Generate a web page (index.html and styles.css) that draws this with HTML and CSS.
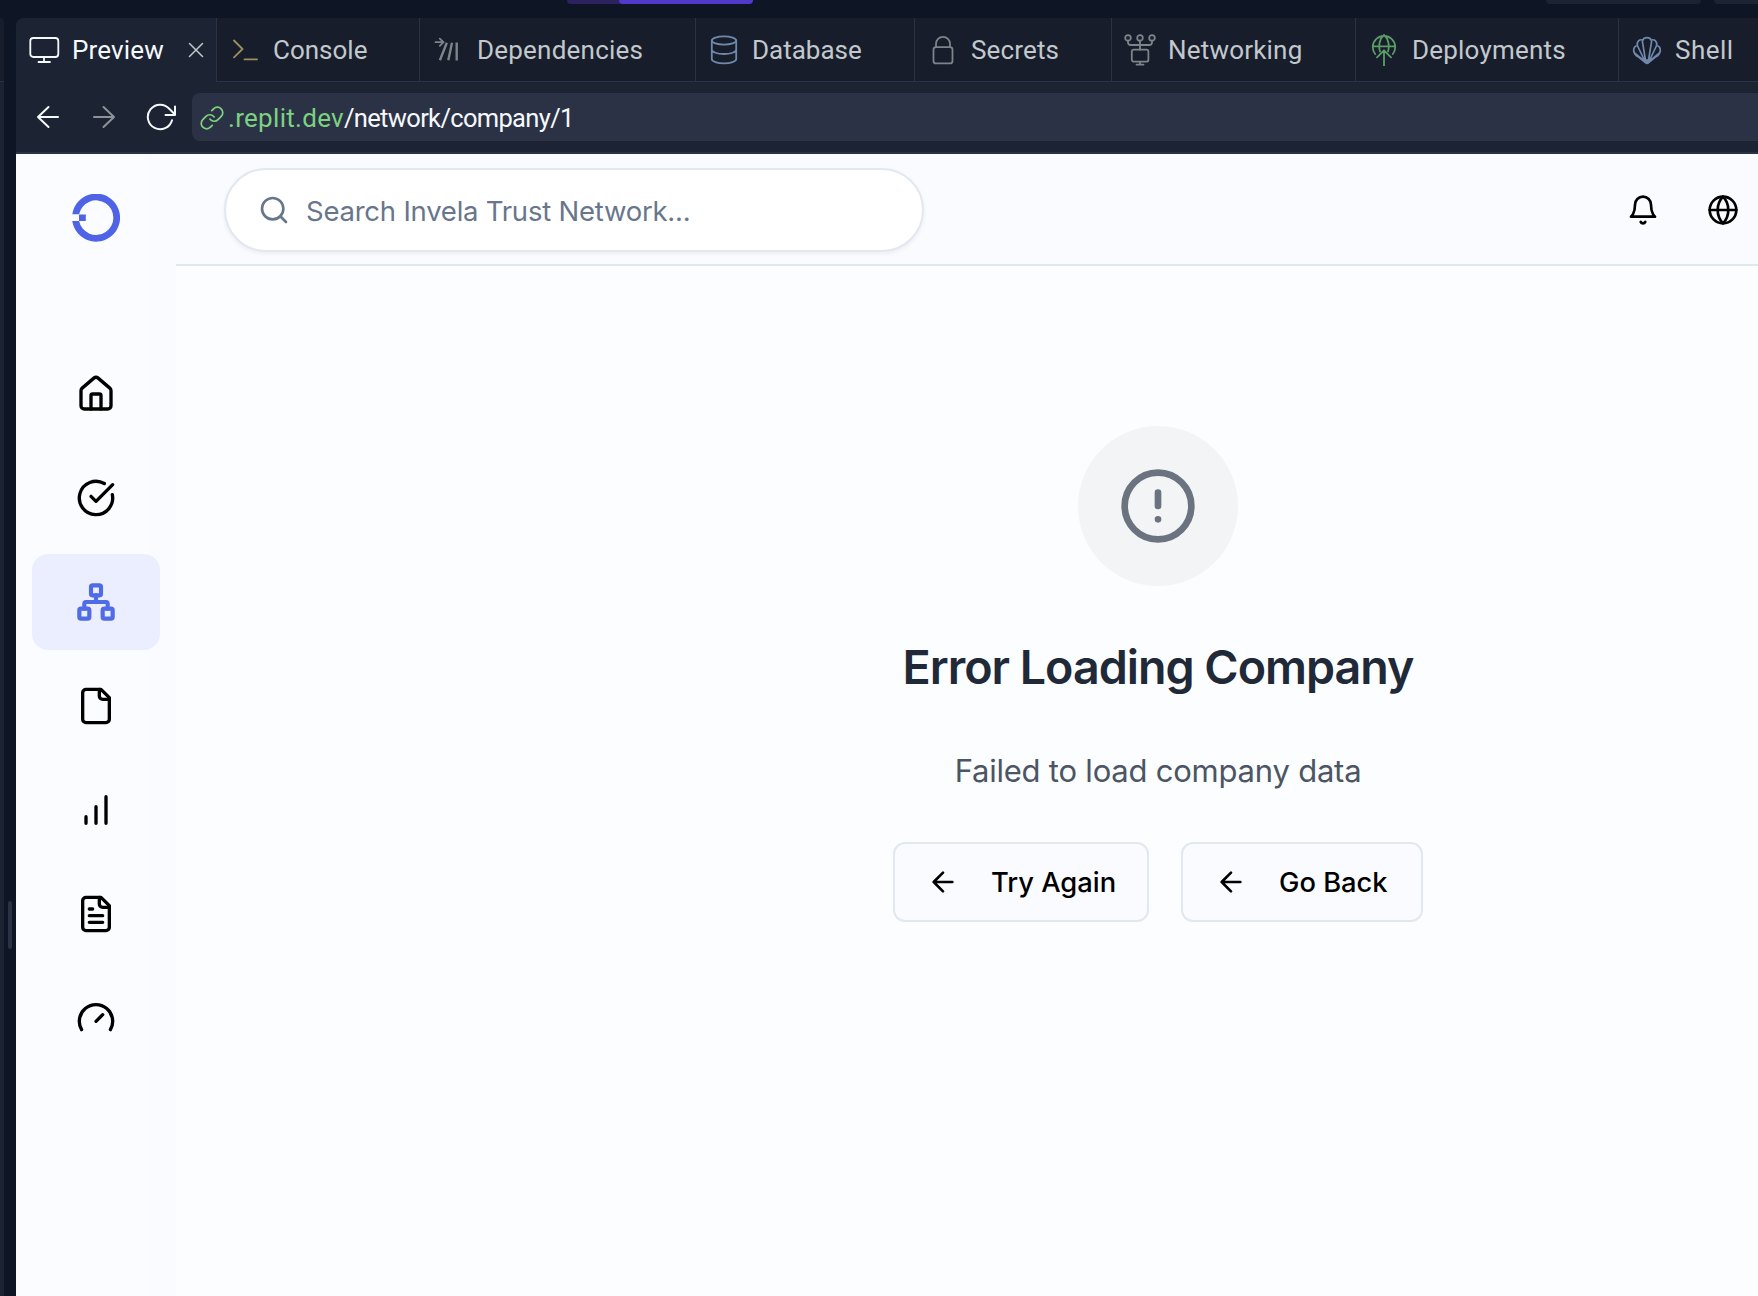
FILE: index.html
```html
<!DOCTYPE html>
<html lang="en">
<head>
<meta charset="utf-8">
<title>Preview</title>
<link rel="stylesheet" href="styles.css">
</head>
<body>
<div class="topbar">
  <div class="run"><div class="run-main"></div></div>
  <div class="chip chip-a"></div>
  <div class="chip chip-b"></div>
</div>
<div class="workspace">
  <div class="left-pane"><div class="left-tab"></div></div>
  <div class="gutter"><div class="handle"></div></div>
  <section class="pane">
    <nav class="tabs">
      <div class="tab active">
        <svg width="32" height="32" viewBox="0 0 32 32"><rect x="2.3" y="4" width="28" height="19" rx="3"/><path d="M16 23v5M10.5 28h11.5"/></svg>
        <span class="t-preview">Preview</span>
        <svg class="close" width="16" height="16" viewBox="0 0 16 16"><path d="M1.5 1.5l13 13M14.5 1.5l-13 13"/></svg>
      </div>
      <div class="tab w-console">
        <svg class="yellow" width="32" height="32" viewBox="0 0 32 32"><path d="M5 6.5l8.5 8.5L5 23.3M15.5 25.4H28"/></svg>
        <span class="t-console">Console</span>
      </div>
      <div class="tab w-deps">
        <svg class="gray" width="32" height="32" viewBox="0 0 32 32"><path d="M3.5 8.2h8M7.8 4.6l3.7 3.6-3.7 3.6"/><path class="thick" d="M14.8 8.8L7.9 26.2M20 8.8l-3.7 17.4M24.7 8.4v18.2"/></svg>
        <span class="t-deps">Dependencies</span>
      </div>
      <div class="tab w-db">
        <svg class="blue" width="32" height="32" viewBox="0 0 32 32"><ellipse cx="16" cy="6.5" rx="12.2" ry="4.1"/><path d="M3.8 6.5V25c0 2.4 5.5 4.3 12.2 4.3S28.2 27.4 28.2 25V6.5M3.8 15.8c0 2.3 5.5 4.2 12.2 4.2s12.2-1.9 12.2-4.2"/></svg>
        <span class="t-db">Database</span>
      </div>
      <div class="tab w-secrets">
        <svg class="gray" width="32" height="32" viewBox="0 0 32 32"><rect x="6.5" y="13.2" width="19" height="16.2" rx="2.5"/><path d="M9 13V9.8a7 7 0 0 1 14 0V13"/></svg>
        <span class="t-secrets">Secrets</span>
      </div>
      <div class="tab w-net">
        <svg class="gray" width="32" height="32" viewBox="0 0 32 32"><circle cx="4" cy="3.9" r="2.8"/><circle cx="16" cy="3.9" r="2.8"/><circle cx="28" cy="3.9" r="2.8"/><path d="M4 6.7v1.5a2.8 2.8 0 0 0 2.8 2.8h18.4A2.8 2.8 0 0 0 28 8.2V6.7M16 6.7v9M16 28v2.500M12.5 30.6h7"/><rect x="7.8" y="15.7" width="16.6" height="12" rx="2"/></svg>
        <span class="t-net">Networking</span>
      </div>
      <div class="tab w-deploy">
        <svg class="green" width="32" height="32" viewBox="0 0 32 32"><path d="M7.2 20a11.2 11.2 0 1 1 17.6 0M4.8 12.3h22.400M12 17.5C10.2 12 11.5 4.5 16 1c4.500 3.500 5.800 11 4 16.500M16 16.500v15.500M9 23.300l7-7 7 7"/></svg>
        <span class="t-deploy">Deployments</span>
      </div>
      <div class="tab w-shell">
        <svg class="blue shell" width="32" height="32" viewBox="0 0 32 32"><path d="M14.600 27L11.400 7.300a4.700 4.700 0 0 1 9.200 0L17.400 27M13.800 27L6.400 11.500C5.500 7.500 8.500 5 11.600 6M18.200 27l7.400-15.500C26.500 7.500 23.500 5 20.400 6M15 29l-8-6.300C4.500 21.500 3.300 19.800 2.700 17c-.2-3 1.300-5 3.700-5.500M17 29l8-6.300c2.500-1.200 3.700-2.900 4.300-5.700.2-3-1.300-5-3.700-5.500M14.500 28L3.500 19M17.500 28l11-9"/><path class="solid" d="M12.500 26l3.500 3.500 3.500-3.500z"/></svg>
        <span class="t-shell">Shell</span>
      </div>
    </nav>
    <div class="toolbar">
      <svg class="nav-i" width="24" height="24" viewBox="0 0 24 24"><path d="M22 12H2M12.500 2L2 12l10.500 10"/></svg>
      <svg class="nav-i dim" width="24" height="24" viewBox="0 0 24 24"><path d="M2 12h20M11.500 2L22 12 11.500 22"/></svg>
      <svg class="nav-i reload" width="32" height="32" viewBox="0 0 32 32"><path d="M28 19.200A12.300 12.300 0 1 1 25.500 8l5.500 5.500M31 5.500v8.500h-9.500"/></svg>
      <div class="url">
        <svg width="26" height="26" viewBox="0 0 24 24"><path d="M10 13a5 5 0 0 0 7.540.540l3-3a5 5 0 0 0-7.070-7.070l-1.720 1.710"/><path d="M14 11a5 5 0 0 0-7.540-.540l-3 3a5 5 0 0 0 7.070 7.070l1.710-1.710"/></svg>
        <span class="host">.replit.dev</span><span class="path">/network/company/1</span>
      </div>
    </div>
    <div class="app">
      <aside class="sidebar">
        <svg class="logo" width="48" height="48" viewBox="0 0 48 48"><path d="M.3 20.300A24 24 0 1 1 .3 27H7.100A17.300 17.300 0 1 0 7.100 20.300zM7 20.500h6.800V27H7z"/></svg>
        <div class="item"><svg class="lu" width="40" height="40" viewBox="0 0 24 24"><path d="M15 21v-8a1 1 0 0 0-1-1h-4a1 1 0 0 0-1 1v8"/><path d="M3 10a2 2 0 0 1 .709-1.528l7-5.999a2 2 0 0 1 2.582 0l7 5.999A2 2 0 0 1 21 10v9a2 2 0 0 1-2 2H5a2 2 0 0 1-2-2z"/></svg></div>
        <div class="item"><svg class="lu" width="40" height="40" viewBox="0 0 24 24"><path d="M21.801 10A10 10 0 1 1 17 3.335"/><path d="m9 11 3 3L22 4"/></svg></div>
        <div class="item current"><svg class="lu" width="40" height="40" viewBox="0 0 24 24"><rect x="16" y="16" width="6" height="6" rx="1"/><rect x="2" y="16" width="6" height="6" rx="1"/><rect x="9" y="2" width="6" height="6" rx="1"/><path d="M5 16v-3a1 1 0 0 1 1-1h12a1 1 0 0 1 1 1v3M12 12V8"/></svg></div>
        <div class="item"><svg class="lu" width="40" height="40" viewBox="0 0 24 24"><path d="M15 2H6a2 2 0 0 0-2 2v16a2 2 0 0 0 2 2h12a2 2 0 0 0 2-2V7Z"/><path d="M14 2v4a2 2 0 0 0 2 2h4"/></svg></div>
        <div class="item"><svg class="lu" width="40" height="40" viewBox="0 0 24 24"><path d="M12 20V10M18 20V4M6 20v-4"/></svg></div>
        <div class="item"><svg class="lu" width="40" height="40" viewBox="0 0 24 24"><path d="M15 2H6a2 2 0 0 0-2 2v16a2 2 0 0 0 2 2h12a2 2 0 0 0 2-2V7Z"/><path d="M14 2v4a2 2 0 0 0 2 2h4M10 9H8M16 13H8M16 17H8"/></svg></div>
        <div class="item"><svg class="lu" width="40" height="40" viewBox="0 0 24 24"><path d="m12 14 4-4M3.340 19a10 10 0 1 1 17.320 0"/></svg></div>
      </aside>
      <div class="content">
        <header class="header">
          <div class="search">
            <svg class="lu" width="32" height="32" viewBox="0 0 24 24"><circle cx="11" cy="11" r="8"/><path d="m21 21-4.300-4.300"/></svg>
            <span>Search Invela Trust Network...</span>
          </div>
          <div class="actions">
            <svg class="lu" width="32" height="32" viewBox="0 0 24 24"><path d="M6 8a6 6 0 0 1 12 0c0 7 3 9 3 9H3s3-2 3-9"/><path d="M10.300 21a1.940 1.940 0 0 0 3.400 0"/></svg>
            <svg class="lu" width="32" height="32" viewBox="0 0 24 24"><circle cx="12" cy="12" r="10"/><path d="M12 2a14.500 14.500 0 0 0 0 20 14.500 14.500 0 0 0 0-20M2 12h20"/></svg>
          </div>
        </header>
        <main class="main">
          <div class="badge"><svg class="lu" width="80" height="80" viewBox="0 0 24 24"><circle cx="12" cy="12" r="10"/><path d="M12 8v4M12 16h.01"/></svg></div>
          <h1>Error Loading Company</h1>
          <p>Failed to load company data</p>
          <div class="buttons">
            <button class="btn b-try"><svg class="lu" width="32" height="32" viewBox="0 0 24 24"><path d="m12 19-7-7 7-7M19 12H5"/></svg><span>Try Again</span></button>
            <button class="btn b-back"><svg class="lu" width="32" height="32" viewBox="0 0 24 24"><path d="m12 19-7-7 7-7M19 12H5"/></svg><span>Go Back</span></button>
          </div>
        </main>
      </div>
    </div>
  </section>
</div>
</body>
</html>
```
FILE: styles.css
```css
* { box-sizing: border-box; }
html, body { height: 100%; }
body {
  margin: 0;
  display: flex;
  flex-direction: column;
  overflow: hidden;
  background: #0e1525;
  font-family: Inter, "Liberation Sans", sans-serif;
}
svg { flex: none; display: block; fill: none; stroke: currentColor; stroke-linecap: round; stroke-linejoin: round; }
.lu { stroke-width: 2; }

.topbar { height: 18px; flex: none; display: flex; align-items: flex-start; padding-left: 567px; overflow: hidden; }
.run { width: 186px; height: 4px; background: #2c2260; border-radius: 0 0 8px 8px; display: flex; justify-content: flex-end; flex: none; }
.run-main { width: 134px; height: 4px; background: #5039cb; border-radius: 0 0 8px 8px; }
.chip { height: 4px; background: #1c2333; border-radius: 0 0 8px 8px; flex: none; }
.chip-a { width: 155px; margin-left: 793px; }
.chip-b { width: 155px; margin-left: 13px; }

.workspace { flex: 1; display: flex; min-height: 0; }
.left-pane { width: 4px; background: #1c2333; border-top-right-radius: 8px; overflow: hidden; }
.left-tab { height: 64px; background: #171d2b; border-bottom: 1px solid #2b3245; }
.gutter { width: 12px; padding: 883px 0 0 4px; }
.handle { width: 4px; height: 48px; border-radius: 2px; background: #2b3245; }
.pane { flex: 1; min-width: 0; display: flex; flex-direction: column; border-top-left-radius: 8px; overflow: hidden; background: #1c2333; }

.tabs { height: 64px; flex: none; display: flex; font: 400 26px/32px Roboto, "Liberation Sans", sans-serif; color: #c2c8cc; overflow: hidden; }
.tab { flex: none; display: flex; align-items: center; gap: 12px; padding-left: 12px; background: #171d2b; border-left: 1px solid #2b3245; border-bottom: 1px solid #2b3245; white-space: nowrap; }
.tab svg { stroke-width: 1.8; }
.tab .shell { stroke-width: 1.7; }
.solid { fill: currentColor; }
.tab .thick { stroke-width: 2.4; stroke-linecap: butt; }
.tab.active { width: 200px; background: #1c2333; border: 0; color: #f5f9fc; }
.tab .close { margin: 0 12px 0 auto; color: #c2c8cc; stroke-width: 1.5; }
.t-preview, .t-secrets { letter-spacing: .15px; }
.t-deps { letter-spacing: .22px; padding-left: 1px; }
.t-net, .t-deploy { letter-spacing: .2px; }
.t-shell { letter-spacing: .45px; }
.w-console { width: 203px; }
.w-deps { width: 276px; }
.w-db { width: 219px; }
.w-secrets { width: 197px; }
.w-net { width: 244px; }
.w-deploy { width: 263px; }
.w-shell { width: 180px; }
.yellow { color: #9c8f5f; }
.gray { color: #7f838a; }
.blue { color: #7088ab; }
.green { color: #5c9c66; }

.toolbar { height: 72px; flex: none; display: flex; align-items: center; padding-left: 20px; border-bottom: 2px solid #2b3245; color: #f5f9fc; }
.nav-i { stroke-width: 2; }
.dim { margin-left: 32px; color: #8e9299; }
.reload { margin-left: 28px; }
.url { flex: 1; align-self: center; height: 48px; margin-left: 16px; padding: 1px 0 0 7px; background: #2b3245; border-radius: 8px 0 0 8px; display: flex; align-items: center; font: 400 26px/32px Roboto, "Liberation Sans", sans-serif; white-space: nowrap; }
.url svg { color: #7dd181; stroke-width: 1.6; }
.host { color: #7dd181; margin-left: 3px; letter-spacing: .3px; }
.path { font-size: 25.5px; letter-spacing: -.67px; }

.app { flex: 1; display: flex; min-height: 0; background: #fcfdff; }
.sidebar { width: 160px; flex: none; display: flex; flex-direction: column; align-items: center; gap: 8px; padding-top: 40px; background: linear-gradient(to right, #fbfcff 132px, #fafbff 132px); color: #000; }
.logo { fill: #4f63e6; stroke: none; margin-bottom: 96px; }
.item { width: 128px; height: 96px; display: flex; align-items: center; justify-content: center; border-radius: 16px; flex: none; }
.current { background: #ebeefe; color: #4f6be6; }
.current svg { stroke-width: 2.5; }
.content { flex: 1; min-width: 0; display: flex; flex-direction: column; }
.header { height: 112px; flex: none; display: flex; align-items: center; justify-content: space-between; padding: 0 19px 0 48px; background: #fafbff; border-bottom: 2px solid #e1e8ec; color: #000; }
.search { width: 700px; height: 84px; margin-top: 2px; border: 2px solid #e2e8f0; border-radius: 42px; background: #fff; box-shadow: 0 2px 4px rgba(0,0,0,.06); display: flex; align-items: center; gap: 16px; padding-left: 32px; font-size: 27.5px; letter-spacing: -.23px; color: #68768c; }
.search span { padding-top: 2px; }
.actions { display: flex; gap: 48px; margin-top: 2px; }
.main { flex: 1; display: flex; flex-direction: column; align-items: center; padding: 160px 0 0 382px; }
.badge { width: 160px; height: 160px; border-radius: 50%; background: #f3f4f6; color: #6b7280; display: flex; align-items: center; justify-content: center; }
h1 { margin: 49px 0 0; font-size: 46.6px; line-height: 64px; font-weight: 600; letter-spacing: -1px; color: #1f2937; white-space: nowrap; }
p { margin: 44px 0 0; font-size: 31px; line-height: 56px; letter-spacing: -.22px; color: #4b5563; white-space: nowrap; }
.buttons { display: flex; gap: 32px; margin-top: 43px; }
.btn { flex: none; height: 80px; display: flex; align-items: center; gap: 32px; padding: 0 0 0 32px; border: 2px solid #e2e8f0; border-radius: 12px; background: #fafbff; color: #000; font: 500 27.3px/32px Inter, "Liberation Sans", sans-serif; white-space: nowrap; }
.btn span { padding-top: 2px; }
.b-try { width: 256px; }
.b-back { width: 242px; }
```
